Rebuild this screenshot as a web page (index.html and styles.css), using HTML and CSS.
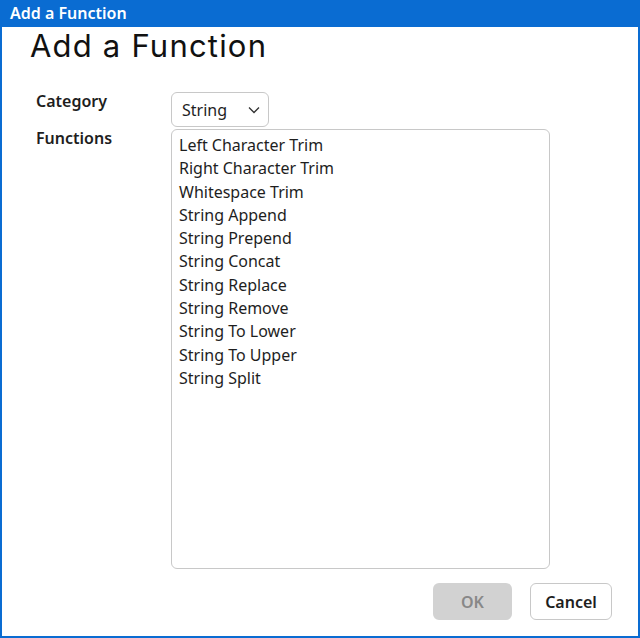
FILE: index.html
```html
<!DOCTYPE html>
<html lang="en">
  <head>
    <meta charset="UTF-8" />
    <title>Add a Function</title>
    <link rel="stylesheet" href="styles.css">
  </head>
  <body>
    <div class="window">
      <div class="title-bar">Add a Function</div>

      <div class="dialog">
        <h1 class="dialog-title">Add a Function</h1>

        <div class="form">
          <label class="form-label" for="category">Category</label>
          <div class="select">
            <span class="select-value">String</span>
            <svg class="select-arrow" width="12" height="8" viewBox="0 0 12 8">
              <path d="M1 1.5 L6 6.5 L11 1.5" fill="none" stroke="#333" stroke-width="1.3" />
            </svg>
          </div>

          <label class="form-label">Functions</label>
          <ul class="listbox">
            <li>Left Character Trim</li>
            <li>Right Character Trim</li>
            <li>Whitespace Trim</li>
            <li>String Append</li>
            <li>String Prepend</li>
            <li>String Concat</li>
            <li>String Replace</li>
            <li>String Remove</li>
            <li>String To Lower</li>
            <li>String To Upper</li>
            <li>String Split</li>
          </ul>
        </div>

        <div class="actions">
          <button class="btn btn-ok" disabled>OK</button>
          <button class="btn btn-cancel">Cancel</button>
        </div>
      </div>
    </div>
  </body>
</html>
```

FILE: styles.css
```css
/* Basis */
body {
  margin: 0;
  padding: 0;
  font-family: "Noto Sans", "Open Sans", sans-serif;
  font-size: 16px;
  color: #1e1e1e;
  background-color: white;
}

/* Vindue med titellinje */
.window {
  height: 638px;
  box-sizing: border-box;
  border: 2px solid #0a6cd2;
  border-top: none;
  display: flex;
  flex-direction: column;
}

.title-bar {
  height: 27px;
  margin: 0 -2px;
  padding-left: 10px;
  background-color: #0a6cd2;
  color: white;
  font-weight: 600;
  font-size: 16px;
  line-height: 27px;
}

.dialog {
  flex: 1;
  display: flex;
  flex-direction: column;
  padding: 0 26px 16px 28px;
}

.dialog-title {
  margin: 0;
  font-family: "Inter", "Lato", sans-serif;
  font-weight: 400;
  font-size: 31px;
  line-height: 38px;
  letter-spacing: 1.2px;
  color: #111;
}

/* Formular */
.form {
  flex: 1;
  display: grid;
  grid-template-columns: 141px 1fr;
  grid-template-rows: auto 1fr;
  row-gap: 2px;
  margin-top: 27px;
  margin-right: 62px;
}

.form-label {
  padding-left: 6px;
  font-weight: 600;
  line-height: 22px;
  margin-top: -2px;
}

.select {
  width: 98px;
  height: 35px;
  box-sizing: border-box;
  border: 1px solid #c8c8c8;
  border-radius: 6px;
  display: flex;
  align-items: center;
  justify-content: space-between;
  padding: 0 8px 0 10px;
}

.select-value {
  line-height: 22px;
}

.listbox {
  margin: 0;
  padding: 4px 7px;
  list-style: none;
  border: 1px solid #c8c8c8;
  border-radius: 6px;
  margin-bottom: 14px;
}

.listbox li {
  line-height: 23.3px;
}

/* Knapper */
.actions {
  display: flex;
  justify-content: flex-end;
  gap: 18px;
}

.btn {
  height: 37px;
  border-radius: 6px;
  font-family: "Noto Sans", sans-serif;
  font-size: 16px;
  font-weight: 600;
  cursor: pointer;
}

.btn-ok {
  width: 79px;
  border: none;
  background-color: #d2d2d2;
  color: #888;
}

.btn-cancel {
  width: 82px;
  border: 1px solid #c8c8c8;
  background-color: white;
  color: #1e1e1e;
}
```
